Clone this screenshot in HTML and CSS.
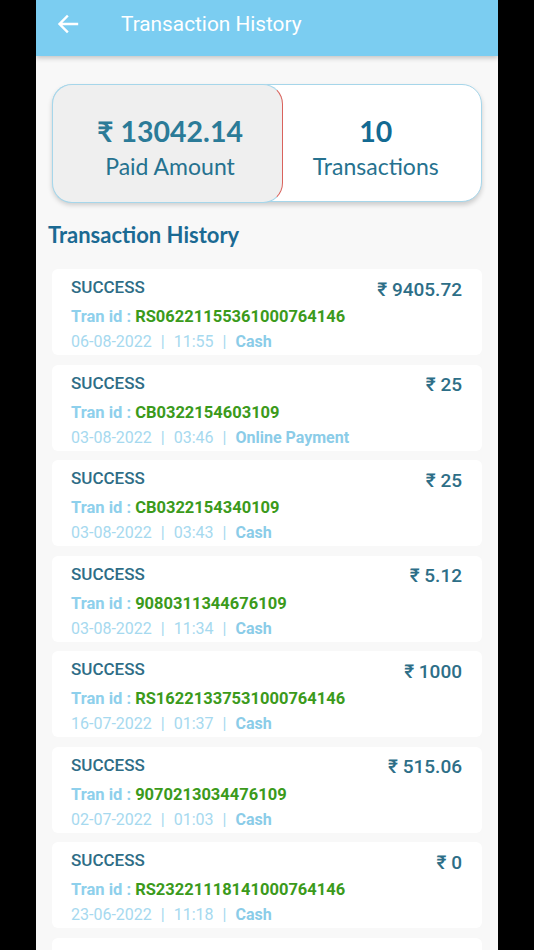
FILE: index.html
```html
<!DOCTYPE html>
<html>
<head>
<meta charset="utf-8">
<link rel="stylesheet" href="styles.css">
</head>
<body>
<div class="app">
  <header class="topbar">
    <svg class="back" width="22" height="20" viewBox="0 0 22 20"><path d="M20 10H3M10 2.5L2.5 10L10 17.5" fill="none" stroke="#fff" stroke-width="2.4" stroke-linecap="square"/></svg>
    <span class="title">Transaction History</span>
  </header>
  <main class="content">
    <section class="summary">
      <div class="sum-left">
        <div class="sum-value">₹ 13042.14</div>
        <div class="sum-label">Paid Amount</div>
      </div>
      <div class="sum-right">
        <div class="sum-value dark">10</div>
        <div class="sum-label">Transactions</div>
      </div>
    </section>
    <h2 class="heading">Transaction History</h2>
    <div class="list">
      <div class="card"><div class="row1"><span class="status">SUCCESS</span><span class="amt">₹ 9405.72</span></div><div class="row2"><span class="lbl">Tran id : </span><span class="tid">RS06221155361000764146</span></div><div class="row3">06-08-2022<span class="sep">|</span>11:55<span class="sep">|</span><b>Cash</b></div></div>
      <div class="card"><div class="row1"><span class="status">SUCCESS</span><span class="amt">₹ 25</span></div><div class="row2"><span class="lbl">Tran id : </span><span class="tid">CB0322154603109</span></div><div class="row3">03-08-2022<span class="sep">|</span>03:46<span class="sep">|</span><b>Online Payment</b></div></div>
      <div class="card"><div class="row1"><span class="status">SUCCESS</span><span class="amt">₹ 25</span></div><div class="row2"><span class="lbl">Tran id : </span><span class="tid">CB0322154340109</span></div><div class="row3">03-08-2022<span class="sep">|</span>03:43<span class="sep">|</span><b>Cash</b></div></div>
      <div class="card"><div class="row1"><span class="status">SUCCESS</span><span class="amt">₹ 5.12</span></div><div class="row2"><span class="lbl">Tran id : </span><span class="tid">9080311344676109</span></div><div class="row3">03-08-2022<span class="sep">|</span>11:34<span class="sep">|</span><b>Cash</b></div></div>
      <div class="card"><div class="row1"><span class="status">SUCCESS</span><span class="amt">₹ 1000</span></div><div class="row2"><span class="lbl">Tran id : </span><span class="tid">RS16221337531000764146</span></div><div class="row3">16-07-2022<span class="sep">|</span>01:37<span class="sep">|</span><b>Cash</b></div></div>
      <div class="card"><div class="row1"><span class="status">SUCCESS</span><span class="amt">₹ 515.06</span></div><div class="row2"><span class="lbl">Tran id : </span><span class="tid">9070213034476109</span></div><div class="row3">02-07-2022<span class="sep">|</span>01:03<span class="sep">|</span><b>Cash</b></div></div>
      <div class="card"><div class="row1"><span class="status">SUCCESS</span><span class="amt">₹ 0</span></div><div class="row2"><span class="lbl">Tran id : </span><span class="tid">RS23221118141000764146</span></div><div class="row3">23-06-2022<span class="sep">|</span>11:18<span class="sep">|</span><b>Cash</b></div></div>
      <div class="card"><div class="row1"><span class="status">SUCCESS</span><span class="amt">₹ 517.30</span></div><div class="row2"><span class="lbl">Tran id : </span><span class="tid">RS21221015121000764146</span></div><div class="row3">21-06-2022<span class="sep">|</span>10:15<span class="sep">|</span><b>Cash</b></div></div>
    </div>
  </main>
</div>
</body>
</html>
```

FILE: styles.css
```css
html, body {
  margin: 0;
  padding: 0;
  background: #000;
  height: 950px;
  overflow: hidden;
}
.app {
  width: 462px;
  margin-left: 36px;
  height: 950px;
  background: #f8f8f8;
  overflow: hidden;
  font-family: Roboto, "Liberation Sans", sans-serif;
}
.topbar {
  height: 56px;
  background: #7bcdf1;
  display: flex;
  align-items: center;
  box-shadow: 0 2px 5px rgba(0,0,0,0.22);
  position: relative;
  z-index: 2;
}
.back {
  margin-left: 21px;
  margin-top: -9px;
}
.title {
  margin-left: 42px;
  margin-top: -8px;
  color: #fff;
  font-size: 20.8px;
}
.content {
  padding: 28px 16px 0 16px;
}
.summary {
  height: 118px;
  box-sizing: border-box;
  border: 1.5px solid #a6d6ea;
  border-radius: 20px;
  background: #fff;
  display: flex;
  box-shadow: 0 3px 5px rgba(0,0,0,0.18);
  font-family: Lato, "Open Sans", sans-serif;
}
.sum-left, .sum-right {
  display: flex;
  flex-direction: column;
  align-items: center;
  justify-content: center;
}
.sum-left {
  width: 231px;
  margin: -1.5px 0 -1.5px -1.5px;
  padding-left: 6px;
  background: #efefef;
  border: 1.5px solid #a6d6ea;
  border-right: 1.5px solid #d9625c;
  border-radius: 20px;
  box-sizing: border-box;
}
.sum-right {
  flex: 1;
  padding-right: 12px;
}
.sum-value {
  font-size: 28.5px;
  font-weight: 700;
  color: #2b7b98;
  line-height: 36px;
  margin-top: 10px;
}
.sum-value.dark {
  color: #136a92;
}
.sum-label {
  font-size: 23px;
  color: #26728f;
  line-height: 34px;
}
.heading {
  margin: 16px 0 0 -4px;
  font-family: Lato, "Open Sans", sans-serif;
  font-size: 22px;
  font-weight: 700;
  color: #1b6a93;
  line-height: 34px;
}
.list {
  margin-top: 17px;
  display: flex;
  flex-direction: column;
  gap: 9.5px;
}
.card {
  height: 86px;
  box-sizing: border-box;
  background: #fff;
  border-radius: 6px;
  padding: 6px 20px 0 19px;
  flex-shrink: 0;
}
.row1 {
  display: flex;
  justify-content: space-between;
  align-items: center;
  height: 24px;
}
.status {
  font-size: 17px;
  font-weight: 500;
  color: #2e6d86;
}
.amt {
  font-size: 19px;
  font-weight: 500;
  color: #2d6e87;
  margin-top: 4px;
}
.row2 {
  margin-top: 6px;
  height: 24px;
  line-height: 24px;
  font-size: 16.5px;
  font-weight: 700;
}
.lbl {
  color: #8ed0ec;
}
.tid {
  color: #3b9a1b;
}
.row3 {
  height: 25px;
  line-height: 25px;
  font-size: 16px;
  color: #a6d9ef;
}
.row3 b {
  color: #8bcce8;
  font-weight: 700;
}
.sep {
  margin: 0 9px;
}
```
